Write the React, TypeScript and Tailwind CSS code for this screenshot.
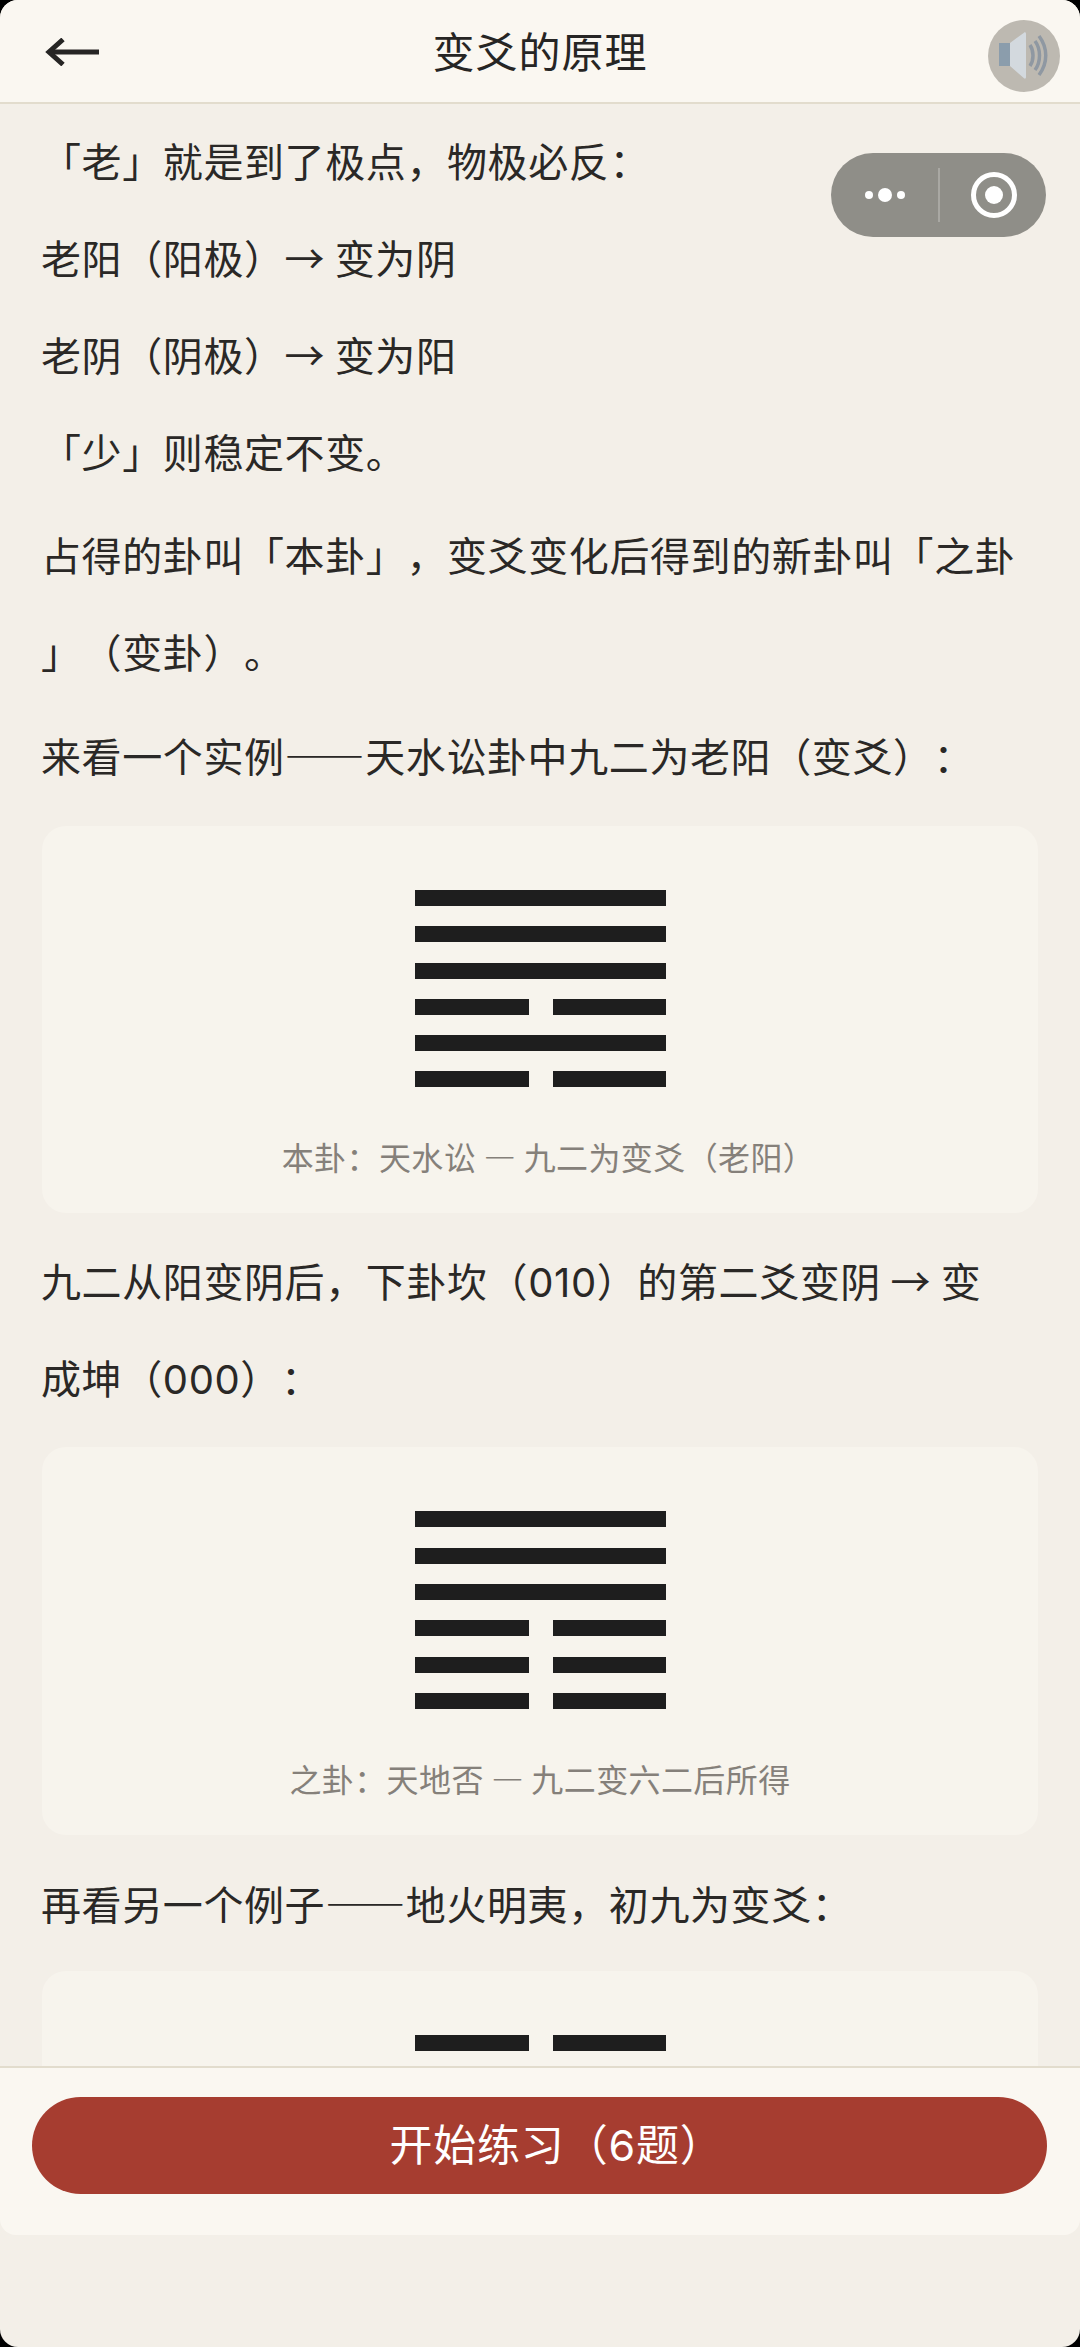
import React from "react";

const FONT = "font-['Noto_Sans_CJK_SC','Noto_Sans',sans-serif] [text-spacing-trim:space-all]";

function Num({ children }: { children: React.ReactNode }) {
  return <span className="font-['Inter'] leading-none">{children}</span>;
}

function Dash({ children }: { children: React.ReactNode }) {
  return <span className="font-medium [font-feature-settings:'fwid']">{children}</span>;
}

function Hexagram({ lines }: { lines: number[] }) {
  return (
    <div className="flex flex-col gap-[20.3px] w-[251px]">
      {lines.map((l, i) =>
        l ? (
          <div key={i} className="h-[16px] bg-[#1e1e1e]" />
        ) : (
          <div key={i} className="h-[16px] flex justify-between">
            <div className="w-[114px] bg-[#1e1e1e]" />
            <div className="w-[113px] bg-[#1e1e1e]" />
          </div>
        )
      )}
    </div>
  );
}

function Card({ lines, children, className = "", captionClass = "" }: { lines: number[]; children?: React.ReactNode; className?: string; captionClass?: string }) {
  return (
    <div className={`bg-[#f7f4ed] rounded-[24px] flex flex-col items-center pt-[64px] pb-[35px] mx-[1px] ${className}`}>
      <Hexagram lines={lines} />
      {children ? (
        <p className={`mt-[47px] text-[32px] leading-[44px] tracking-[0.4px] text-[#85807a] ${captionClass}`}>{children}</p>
      ) : null}
    </div>
  );
}

function P({ children, className = "" }: { children: React.ReactNode; className?: string }) {
  return <p className={`text-[40px] leading-[97px] text-[#2a2826] tracking-[0.6px] ${className}`}>{children}</p>;
}

export default function App() {
  return (
    <div className={`w-[1080px] h-[2347px] bg-black ${FONT}`}>
      <div className="relative w-full h-full bg-[#f3efe8] rounded-[18px] overflow-hidden flex flex-col">
        <header className="h-[104px] shrink-0 bg-[#faf7f1] border-b-2 border-[#e2dccd] flex items-center justify-between pl-[45px] pr-[20px]">
          <svg width="55" height="28" viewBox="0 0 55 28" fill="none" stroke="#262524" strokeWidth="5" className="mt-[1px]">
            <path d="M54 14H4" />
            <path d="M18 1.5 4 14l14 12.5" />
          </svg>
          <h1 className="absolute left-0 right-0 top-[-3px] h-[104px] flex items-center justify-center text-[42px] text-[#262524] tracking-[1px] pointer-events-none">
            变爻的原理
          </h1>
          <div className="w-[72px] h-[72px] mt-[9px] rounded-full bg-[#bdb9b1] flex items-center justify-center">
            <svg width="50" height="47" viewBox="0 0 50 47">
              <path d="M0 11h11v23H0z" fill="#8b9dac" />
              <path d="M11 11 25 .7c1-1 2 0 2 1v43.6c0 1-1 2-2 1L11 34z" fill="#d3d9de" />
              <g fill="none" stroke="#8f98a2" strokeWidth="3.5">
                <path d="M31 13c4 6 4 15 0 21" />
                <path d="M36 9c6 8 6 21 0 29" />
                <path d="M40 4c9 12 9 27 0 39" />
              </g>
            </svg>
          </div>
        </header>

        <div className="absolute left-[831px] top-[153px] w-[215px] h-[84px] rounded-full bg-[#8f8e88] flex items-center">
          <div className="w-[107px] flex items-center justify-center gap-[5px]">
            <span className="w-[8px] h-[8px] rounded-full bg-white" />
            <span className="w-[14px] h-[14px] rounded-full bg-white" />
            <span className="w-[8px] h-[8px] rounded-full bg-white" />
          </div>
          <div className="w-[2px] h-[54px] bg-[#a9a8a3]" />
          <div className="flex-1 flex items-center justify-center pl-[2px]">
            <div className="w-[46px] h-[46px] rounded-full border-[5px] border-white flex items-center justify-center">
              <div className="w-[18px] h-[18px] rounded-full bg-white" />
            </div>
          </div>
        </div>

        <main className="flex-1 min-h-0 overflow-hidden px-[41px] pt-[8px]">
          <P>「老」就是到了极点，物极必反：</P>
          <P>老阳（阳极）→ 变为阴</P>
          <P>老阴（阴极）→ 变为阳</P>
          <P>「少」则稳定不变。</P>
          <P className="mt-[6px]">占得的卦叫「本卦」，变爻变化后得到的新卦叫「之卦<br />」（变卦）。</P>
          <P className="mt-[7px]">来看一个实例<Dash>——</Dash>天水讼卦中九二为老阳（变爻）：</P>
          <Card className="mt-[22px]" captionClass="ml-[17px]" lines={[1, 1, 1, 0, 1, 0]}>本卦：天水讼 <Dash>—</Dash> 九二为变爻（老阳）</Card>
          <P className="mt-[19px]">九二从阳变阴后，下卦坎（<Num>010</Num>）的第二爻变阴 → 变<br />成坤（<Num>000</Num>）：</P>
          <Card className="mt-[21px]" lines={[1, 1, 1, 0, 0, 0]}>之卦：天地否 <Dash>—</Dash> 九二变六二后所得</Card>
          <P className="mt-[20px]">再看另一个例子<Dash>——</Dash>地火明夷，初九为变爻：</P>
          <Card className="mt-[19px]" lines={[0, 1]} />
        </main>

        <footer className="shrink-0 h-[169px] bg-[#faf7f1] border-t-2 border-[#e2dccd] rounded-b-[16px] px-[32px] pt-[29px]">
          <button className="w-[1015px] h-[97px] rounded-full bg-[#a63d30] text-white text-[43px] leading-[91px] pb-[6px] pl-[34px] tracking-[0.8px] flex items-center justify-center">
            <span>开始练习（<Num>6</Num>题）</span>
          </button>
        </footer>
        <div className="h-[112px] shrink-0" />
      </div>
    </div>
  );
}
